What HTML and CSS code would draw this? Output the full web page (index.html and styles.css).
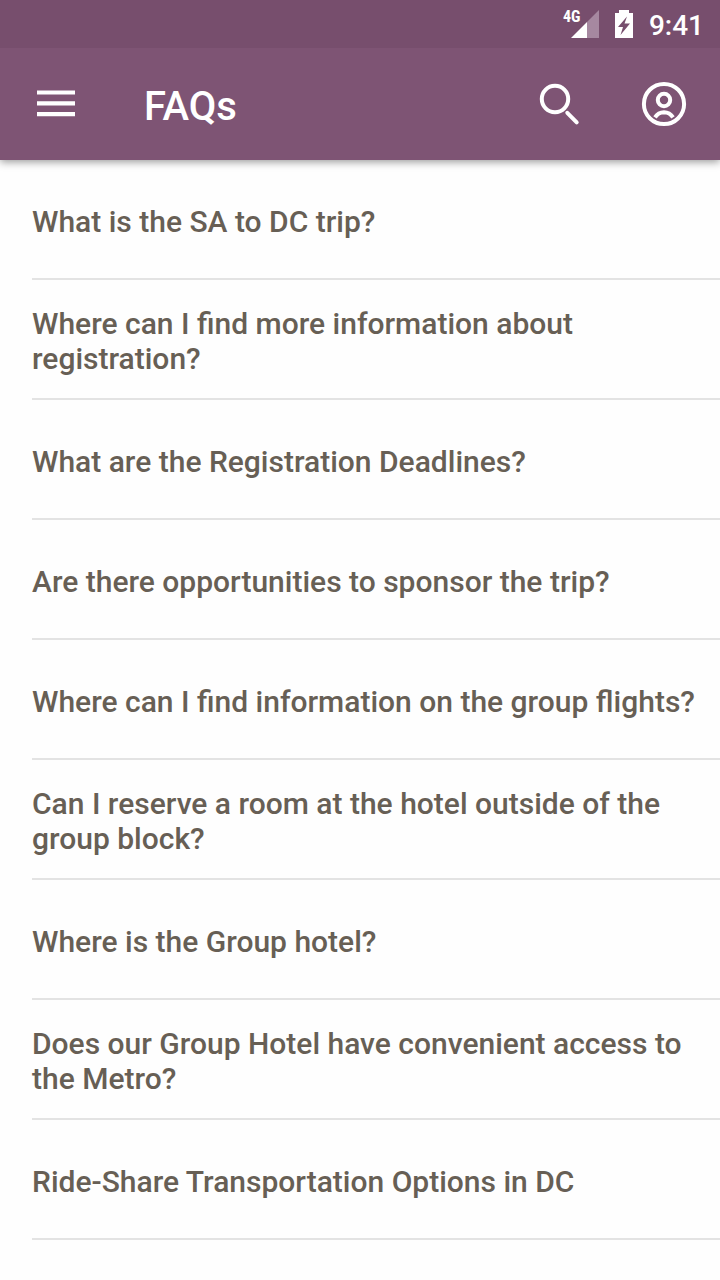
FILE: index.html
```html
<!DOCTYPE html>
<html lang="en">
<head>
<meta charset="utf-8">
<meta name="viewport" content="width=device-width, initial-scale=1">
<title>FAQs</title>
<link rel="stylesheet" href="styles.css">
</head>
<body>
<header class="app-header">
  <div class="status-bar">
    <div class="signal">
      <svg width="36" height="28" viewBox="0 0 36 28" aria-hidden="true">
        <path class="signal-weak" d="M24 12 36 0V28H24Z"/>
        <path d="M8 28 24 12V28Z"/>
      </svg>
      <span class="network">4G</span>
    </div>
    <svg class="battery" width="20" height="28" viewBox="0 0 20 28" aria-hidden="true">
      <path fill-rule="evenodd" d="M5 0H15V3H19V28H1V3H5ZM13 6.5 4 17H9L6.5 25 16 13.5H10.5Z"/>
    </svg>
    <time class="clock">9:41</time>
  </div>
  <div class="toolbar">
    <button class="icon-button" type="button" aria-label="Open menu">
      <svg width="48" height="48" viewBox="0 0 48 48" aria-hidden="true">
        <path d="M5 10.4H43V14.6H5ZM5 21.2H43V25.4H5ZM5 32H43V36.2H5Z"/>
      </svg>
    </button>
    <h1 class="title">FAQs</h1>
    <div class="actions">
      <button class="icon-button" type="button" aria-label="Search">
        <svg class="line-icon" width="48" height="48" viewBox="0 0 48 48" aria-hidden="true">
          <circle cx="19" cy="19" r="13.2"/>
          <path d="M31.3 32.8 40.7 42.4" stroke-linecap="round"/>
        </svg>
      </button>
      <button class="icon-button" type="button" aria-label="Account">
        <svg class="line-icon" width="48" height="48" viewBox="0 0 48 48" aria-hidden="true">
          <circle cx="24" cy="24" r="20.1"/>
          <circle cx="24" cy="20" r="6.2"/>
          <path d="M15 37.4Q18.2 32.3 24 32.2 29.8 32.3 33 37.4"/>
        </svg>
      </button>
    </div>
  </div>
</header>
<main>
  <ul class="faq-list">
    <li class="faq-item"><a class="faq-link" href="#trip">What is the SA to DC trip?</a></li>
    <li class="faq-item"><a class="faq-link" href="#registration">Where can I find more information about registration?</a></li>
    <li class="faq-item"><a class="faq-link" href="#deadlines">What are the Registration Deadlines?</a></li>
    <li class="faq-item"><a class="faq-link" href="#sponsor">Are there opportunities to sponsor the trip?</a></li>
    <li class="faq-item"><a class="faq-link" href="#flights">Where can I find information on the group flights?</a></li>
    <li class="faq-item"><a class="faq-link" href="#reserve">Can I reserve a room at the hotel outside of the group block?</a></li>
    <li class="faq-item"><a class="faq-link" href="#hotel">Where is the Group hotel?</a></li>
    <li class="faq-item"><a class="faq-link" href="#metro">Does our Group Hotel have convenient access to the Metro?</a></li>
    <li class="faq-item"><a class="faq-link" href="#ride-share">Ride-Share Transportation Options in DC</a></li>
  </ul>
</main>
</body>
</html>
```
FILE: styles.css
```css
* {
  box-sizing: border-box;
}

body {
  margin: 0;
  background: #fefefe;
  color: #675f55;
  font-family: Roboto, "Liberation Sans", sans-serif;
  font-weight: 500;
}

svg {
  display: block;
  fill: #fff;
}

.app-header {
  background: #7e5474;
  color: #fff;
  box-shadow: 0 2px 8px rgba(0, 0, 0, 0.4);
}

.status-bar {
  display: flex;
  align-items: center;
  justify-content: flex-end;
  gap: 15px;
  height: 48px;
  padding-right: 16px;
  background: #774e6d;
}

.signal {
  position: relative;
}

.signal-weak {
  fill: #a688a0;
}

.network {
  position: absolute;
  top: 0;
  left: 0;
  font-family: "Roboto Condensed", Roboto, sans-serif;
  font-size: 16px;
  font-weight: 700;
  line-height: 14px;
}

.clock {
  padding-top: 4px;
  font-size: 28px;
  line-height: 44px;
}

.toolbar {
  display: flex;
  align-items: center;
  height: 112px;
  padding: 0 32px;
  gap: 64px;
}

.icon-button {
  padding: 0;
  border: 0;
  background: none;
  cursor: pointer;
}

.title {
  margin: 0;
  padding-top: 6px;
  font-size: 40px;
  font-weight: 500;
  line-height: 48px;
}

.actions {
  display: flex;
  gap: 56px;
  margin-left: auto;
}

.line-icon {
  fill: none;
  stroke: #fff;
  stroke-width: 4;
}

.faq-list {
  margin: 0;
  padding: 0 0 0 32px;
  list-style: none;
}

.faq-item {
  border-bottom: 2px solid #e3e3e3;
}

.faq-link {
  display: flex;
  align-items: center;
  min-height: 118px;
  padding: 20px 24px 16px 0;
  color: inherit;
  font-size: 30px;
  line-height: 35px;
  text-decoration: none;
}
```
